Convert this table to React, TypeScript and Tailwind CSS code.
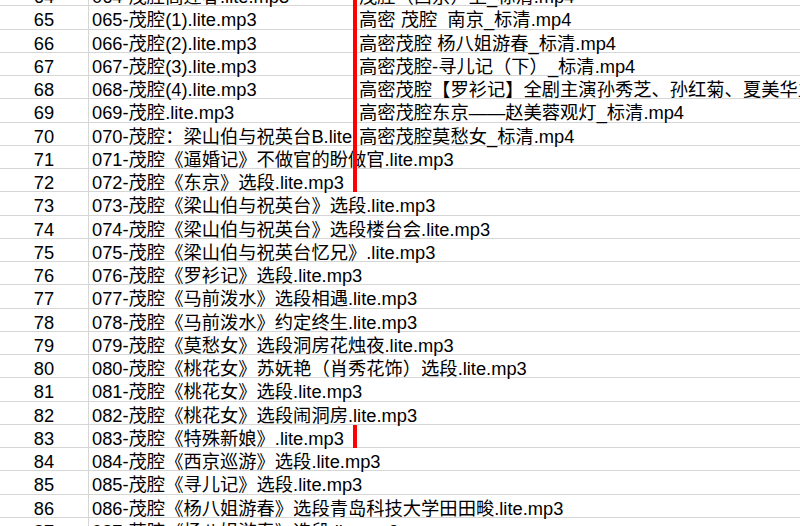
const rows: { n: number; b: string; c?: string; mark?: boolean }[] = [
  { n: 64, b: "064-茂腔高迎春.lite.mp3", c: "茂腔（西京）上_标清.mp4", mark: true },
  { n: 65, b: "065-茂腔(1).lite.mp3", c: "高密 茂腔  南京_标清.mp4", mark: true },
  { n: 66, b: "066-茂腔(2).lite.mp3", c: "高密茂腔 杨八姐游春_标清.mp4", mark: true },
  { n: 67, b: "067-茂腔(3).lite.mp3", c: "高密茂腔-寻儿记（下）_标清.mp4", mark: true },
  { n: 68, b: "068-茂腔(4).lite.mp3", c: "高密茂腔【罗衫记】全剧主演孙秀芝、孙红菊、夏美华主演_标清.mp4", mark: true },
  { n: 69, b: "069-茂腔.lite.mp3", c: "高密茂腔东京——赵美蓉观灯_标清.mp4", mark: true },
  { n: 70, b: "070-茂腔：梁山伯与祝英台B.lite.mp3", c: "高密茂腔莫愁女_标清.mp4", mark: true },
  { n: 71, b: "071-茂腔《逼婚记》不做官的盼做官.lite.mp3", mark: true },
  { n: 72, b: "072-茂腔《东京》选段.lite.mp3", mark: true },
  { n: 73, b: "073-茂腔《梁山伯与祝英台》选段.lite.mp3" },
  { n: 74, b: "074-茂腔《梁山伯与祝英台》选段楼台会.lite.mp3" },
  { n: 75, b: "075-茂腔《梁山伯与祝英台忆兄》.lite.mp3" },
  { n: 76, b: "076-茂腔《罗衫记》选段.lite.mp3" },
  { n: 77, b: "077-茂腔《马前泼水》选段相遇.lite.mp3" },
  { n: 78, b: "078-茂腔《马前泼水》约定终生.lite.mp3" },
  { n: 79, b: "079-茂腔《莫愁女》选段洞房花烛夜.lite.mp3" },
  { n: 80, b: "080-茂腔《桃花女》苏妩艳（肖秀花饰）选段.lite.mp3" },
  { n: 81, b: "081-茂腔《桃花女》选段.lite.mp3" },
  { n: 82, b: "082-茂腔《桃花女》选段闹洞房.lite.mp3" },
  { n: 83, b: "083-茂腔《特殊新娘》.lite.mp3", mark: true },
  { n: 84, b: "084-茂腔《西京巡游》选段.lite.mp3" },
  { n: 85, b: "085-茂腔《寻儿记》选段.lite.mp3" },
  { n: 86, b: "086-茂腔《杨八姐游春》选段青岛科技大学田田畯.lite.mp3" },
  { n: 87, b: "087-茂腔《杨八姐游春》选段.lite.mp3" },
];

export default function App() {
  return (
    <div
      className="w-[800px] h-[526px] overflow-hidden bg-white text-black text-[18.3px]"
      style={{ fontFamily: '"Liberation Sans", "Noto Sans CJK SC", sans-serif' }}
    >
      <div className="-mt-[17px]">
        {rows.map((row) => (
          <div key={row.n} className="relative flex h-[23.25px] border-b border-[#d6d6d6]">
            <div className="w-[89px] shrink-0 border-r border-[#d6d6d6] text-center leading-[18px] pt-[5px]">
              {row.n}
            </div>
            <div
              className={`w-[267px] shrink-0 pl-[3px] whitespace-pre leading-[18px] pt-[5px] ${
                row.c ? "overflow-x-clip" : ""
              }`}
            >
              {row.b}
            </div>
            <div className="flex-1 pl-[3px] whitespace-pre overflow-x-clip leading-[18px] pt-[5px]">
              {row.c ?? ""}
            </div>
            {row.mark && <div className="absolute left-[353px] top-0 -bottom-px w-[4px] bg-[#ff0000]" />}
          </div>
        ))}
      </div>
    </div>
  );
}
